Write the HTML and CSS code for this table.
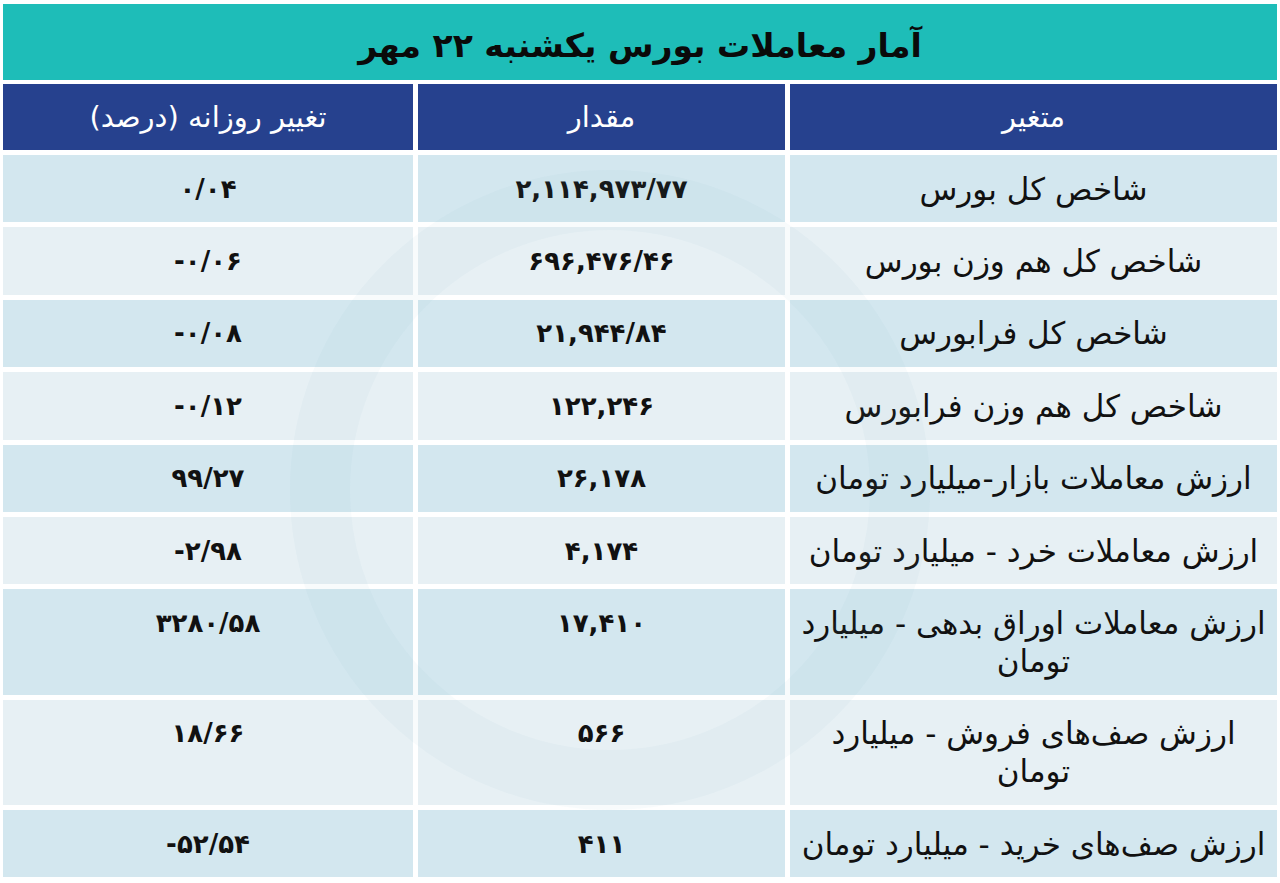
FILE: index.html
```html
<!DOCTYPE html>
<html lang="fa" dir="rtl">
<head>
<meta charset="utf-8">
<title>آمار معاملات بورس</title>
<link rel="stylesheet" href="styles.css">
</head>
<body>
<div class="page">
  <div class="watermark"></div>
  <h1 class="title">آمار معاملات بورس یکشنبه ۲۲ مهر</h1>
  <table class="stats">
    <colgroup>
      <col class="c-name">
      <col class="c-value">
      <col class="c-change">
    </colgroup>
    <thead>
      <tr><th>متغیر</th><th>مقدار</th><th>تغییر روزانه (درصد)</th></tr>
    </thead>
    <tbody>
      <tr><td class="name">شاخص کل بورس</td><td class="num">۲,۱۱۴,۹۷۳/۷۷</td><td class="num">۰/۰۴</td></tr>
      <tr><td class="name">شاخص کل هم وزن بورس</td><td class="num">۶۹۶,۴۷۶/۴۶</td><td class="num">-۰/۰۶</td></tr>
      <tr><td class="name">شاخص کل فرابورس</td><td class="num">۲۱,۹۴۴/۸۴</td><td class="num">-۰/۰۸</td></tr>
      <tr><td class="name">شاخص کل هم وزن فرابورس</td><td class="num">۱۲۲,۲۴۶</td><td class="num">-۰/۱۲</td></tr>
      <tr><td class="name">ارزش معاملات بازار-میلیارد تومان</td><td class="num">۲۶,۱۷۸</td><td class="num">۹۹/۲۷</td></tr>
      <tr><td class="name">ارزش معاملات خرد - میلیارد تومان</td><td class="num">۴,۱۷۴</td><td class="num">-۲/۹۸</td></tr>
      <tr><td class="name">ارزش معاملات اوراق بدهی - میلیارد<br>تومان</td><td class="num">۱۷,۴۱۰</td><td class="num">۳۲۸۰/۵۸</td></tr>
      <tr><td class="name">ارزش صف‌های فروش - میلیارد<br>تومان</td><td class="num">۵۶۶</td><td class="num">۱۸/۶۶</td></tr>
      <tr><td class="name">ارزش صف‌های خرید - میلیارد تومان</td><td class="num">۴۱۱</td><td class="num">-۵۲/۵۴</td></tr>
    </tbody>
  </table>
</div>
</body>
</html>
```
FILE: styles.css
```css
html, body {
  margin: 0;
  padding: 0;
  background: #ffffff;
}
body {
  font-family: "DejaVu Sans", "Noto Sans", sans-serif;
  color: #111111;
}
.page {
  position: relative;
  width: 1280px;
  overflow: hidden;
}
.watermark {
  position: absolute;
  left: 290px;
  top: 170px;
  width: 520px;
  height: 520px;
  border-radius: 50%;
  border: 60px solid rgba(120, 180, 205, 0.05);
  pointer-events: none;
  z-index: 2;
}
.title {
  margin: 4px 3px 0;
  height: 76px;
  background: #1ebdb8;
  color: #0a0a0a;
  font-size: 33px;
  font-weight: bold;
  text-align: center;
  line-height: 84px;
}
.stats {
  direction: rtl;
  border-collapse: separate;
  border-spacing: 5px 5px;
  margin: -1px -2px 0;
  width: 1284px;
  table-layout: fixed;
}
.c-name { width: 487px; }
.c-value { width: 367px; }
.c-change { width: 410px; }
.stats th {
  background: #26418e;
  color: #ffffff;
  font-weight: normal;
  font-size: 29px;
  height: 66px;
  padding: 0;
  vertical-align: middle;
}
.stats td {
  padding: 14.7px 3px;
  line-height: 38px;
  text-align: center;
  vertical-align: top;
  white-space: nowrap;
}
.stats tbody tr:nth-child(odd) td { background: #d3e7ef; }
.stats tbody tr:nth-child(even) td { background: #e7f0f4; }
.name {
  font-size: 31px;
}
.num {
  direction: ltr;
  font-size: 26px;
  font-weight: bold;
}
```
